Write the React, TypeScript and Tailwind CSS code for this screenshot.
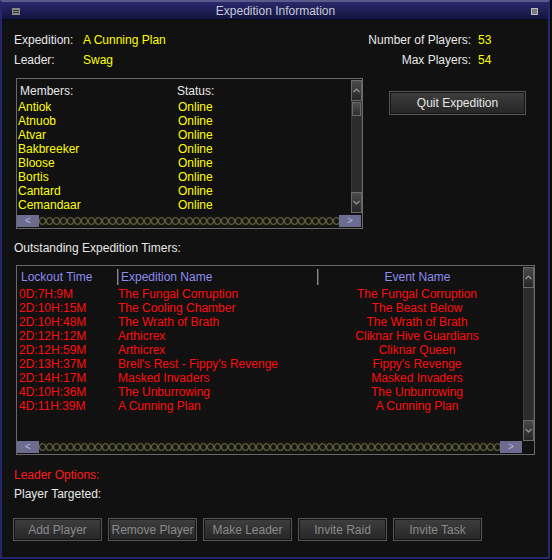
const members = [
  "Antiok",
  "Atnuob",
  "Atvar",
  "Bakbreeker",
  "Bloose",
  "Bortis",
  "Cantard",
  "Cemandaar",
  "Cilikia",
];

const timers = [
  ["0D:7H:9M", "The Fungal Corruption", "The Fungal Corruption"],
  ["2D:10H:15M", "The Cooling Chamber", "The Beast Below"],
  ["2D:10H:48M", "The Wrath of Brath", "The Wrath of Brath"],
  ["2D:12H:12M", "Arthicrex", "Cliknar Hive Guardians"],
  ["2D:12H:59M", "Arthicrex", "Cliknar Queen"],
  ["2D:13H:37M", "Brell's Rest - Fippy's Revenge", "Fippy's Revenge"],
  ["2D:14H:17M", "Masked Invaders", "Masked Invaders"],
  ["4D:10H:36M", "The Unburrowing", "The Unburrowing"],
  ["4D:11H:39M", "A Cunning Plan", "A Cunning Plan"],
];

function Chevron({ up }: { up?: boolean }) {
  return (
    <svg width="7" height="5" viewBox="0 0 7 5">
      <polyline
        points={up ? "0.5,4 3.5,1 6.5,4" : "0.5,1 3.5,4 6.5,1"}
        fill="none"
        stroke="#9a9a9a"
        strokeWidth="1.2"
      />
    </svg>
  );
}

function ArrowBtn({ up }: { up?: boolean }) {
  return (
    <div className="flex h-[21px] items-center justify-center border border-[#6a6a6a] bg-gradient-to-b from-[#4a4a4a] to-[#262626]">
      <Chevron up={up} />
    </div>
  );
}

function VScroll({ thumb }: { thumb?: boolean }) {
  return (
    <div className="flex w-[11px] flex-col">
      <ArrowBtn up />
      <div className="flex flex-1 flex-col border-x border-[#3a3a3a] bg-[#2c2c2c]">
        {thumb && (
          <div className="mt-[1px] h-[14px] border border-[#6a6a6a] bg-gradient-to-b from-[#4e4e4e] to-[#303030]" />
        )}
      </div>
      <ArrowBtn />
    </div>
  );
}

function HScroll({ id }: { id: string }) {
  return (
    <div className="flex h-[12px] flex-1">
      <div className="flex w-[22px] items-center justify-center bg-[#6c6c90] text-[10px] leading-[10px] text-[#b8b8d8]">
        &lt;
      </div>
      <svg className="h-[12px] flex-1">
        <defs>
          <pattern id={id} width="7" height="12" patternUnits="userSpaceOnUse">
            <ellipse cx="3.5" cy="6" rx="3" ry="3.4" fill="none" stroke="#5c5c3c" strokeWidth="1.3" />
          </pattern>
        </defs>
        <rect width="100%" height="100%" fill="#151510" />
        <rect width="100%" height="100%" fill={`url(#${id})`} />
      </svg>
      <div className="flex w-[22px] items-center justify-center bg-[#6c6c90] text-[10px] leading-[10px] text-[#b8b8d8]">
        &gt;
      </div>
    </div>
  );
}

function Button({ label, dim }: { label: string; dim?: boolean }) {
  return (
    <div
      className={`flex h-full items-center justify-center border border-[#555] bg-gradient-to-b from-[#3e3e3e] to-[#262626] shadow-[inset_0_0_0_1px_#151515] ${
        dim ? "text-[#8a8a8a]" : "text-[#e6e6e6]"
      }`}
    >
      {label}
    </div>
  );
}

export default function App() {
  return (
    <div className="h-[560px] w-[552px] bg-[#0a0a0a]">
      <div className="flex h-[559px] w-[550px] flex-col border-2 border-t-[#5a5a8c] border-x-[#26266e] border-b-[#26266e] bg-[#111111] font-['Liberation_Sans',Arial,sans-serif] text-[12px] leading-[14px] text-[#e8e8e8]">
        {/* title bar */}
        <div className="flex h-[18px] items-center border-b border-[#08081c] bg-gradient-to-b from-[#2a2a6c] to-[#141440] px-[10px] pt-[1px]">
          <div className="flex h-[7px] w-[8px] flex-col justify-center gap-[1px] bg-[#8a8a8a] px-[1px]">
            <div className="h-[1px] bg-[#333]" />
            <div className="h-[1px] bg-[#333]" />
          </div>
          <div className="flex-1 text-center text-[#c8c8d8]">Expedition Information</div>
          <div className="h-[7px] w-[7px] border border-[#bbb] bg-[#7a7a7a]" />
        </div>

        <div className="flex flex-col pl-[12px]">
          {/* top info */}
          <div className="mt-[13px] flex">
            <div className="grid grid-cols-[69px_auto] gap-y-[6px]">
              <span>Expedition:</span>
              <span className="text-[#ffff00]">A Cunning Plan</span>
              <span>Leader:</span>
              <span className="text-[#ffff00]">Swag</span>
            </div>
            <div className="ml-auto mr-[10px] grid grid-cols-[auto_60px] gap-x-[7px] gap-y-[6px]">
              <span className="text-right">Number of Players:</span>
              <span className="text-[#ffff00]">53</span>
              <span className="text-right">Max Players:</span>
              <span className="text-[#ffff00]">54</span>
            </div>
          </div>

          {/* members */}
          <div className="mt-[11px] flex items-start">
            <div className="ml-[2px] flex h-[151px] w-[347px] flex-col border border-[#6a6a6a]">
              <div className="flex h-[135px]">
                <div className="flex-1 overflow-hidden pt-[5px]">
                  <div className="flex">
                    <span className="w-[160px] pl-[3px]">Members:</span>
                    <span>Status:</span>
                  </div>
                  <div className="mt-[2px] flex flex-col text-[#ffff00]">
                    {members.map((m) => (
                      <div key={m} className="flex">
                        <span className="w-[161px] pl-[1px]">{m}</span>
                        <span>Online</span>
                      </div>
                    ))}
                  </div>
                </div>
                <div className="ml-[1px] flex py-[1px]">
                  <VScroll thumb />
                </div>
              </div>
              <div className="mt-[1px] flex">
                <HScroll id="chainA" />
                <div className="w-[12px]" />
              </div>
            </div>
            <div className="ml-[26px] mt-[13px] h-[24px] w-[137px]">
              <Button label="Quit Expedition" />
            </div>
          </div>

          <div className="mt-[12px]">Outstanding Expedition Timers:</div>

          {/* timers */}
          <div className="ml-[2px] mt-[10px] flex h-[190px] w-[519px] flex-col border border-[#6a6a6a]">
            <div className="flex h-[175px]">
              <div className="flex-1 overflow-hidden pt-[3px]">
                <div className="flex h-[16px] items-center text-[#8c8cf0]">
                  <span className="w-[100px] pl-[4px]">Lockout Time</span>
                  <div className="h-[16px] w-[2px] border-l border-[#888] bg-[#444]" />
                  <span className="w-[198px] pl-[2px]">Expedition Name</span>
                  <div className="h-[16px] w-[2px] border-l border-[#888] bg-[#444]" />
                  <span className="flex-1 pr-[6px] text-center">Event Name</span>
                </div>
                <div className="mt-[2px] flex flex-col text-[#ff0d0d]">
                  {timers.map((t, i) => (
                    <div key={i} className="flex">
                      <span className="w-[101px] pl-[2px]">{t[0]}</span>
                      <span className="w-[200px]">{t[1]}</span>
                      <span className="flex-1 pr-[6px] text-center">{t[2]}</span>
                    </div>
                  ))}
                </div>
              </div>
              <div className="ml-[1px] flex pt-[1px]">
                <VScroll />
              </div>
            </div>
            <div className="flex">
              <HScroll id="chainB" />
              <div className="w-[12px]" />
            </div>
          </div>

          <div className="mt-[13px] text-[#ff1a1a]">Leader Options:</div>
          <div className="mt-[5px]">Player Targeted:</div>

          <div className="-ml-[1px] mt-[17px] grid h-[23px] grid-cols-[89px_89px_89px_89px_89px] gap-x-[6px]">
            <Button label="Add Player" dim />
            <Button label="Remove Player" dim />
            <Button label="Make Leader" dim />
            <Button label="Invite Raid" dim />
            <Button label="Invite Task" dim />
          </div>
        </div>
      </div>
    </div>
  );
}
